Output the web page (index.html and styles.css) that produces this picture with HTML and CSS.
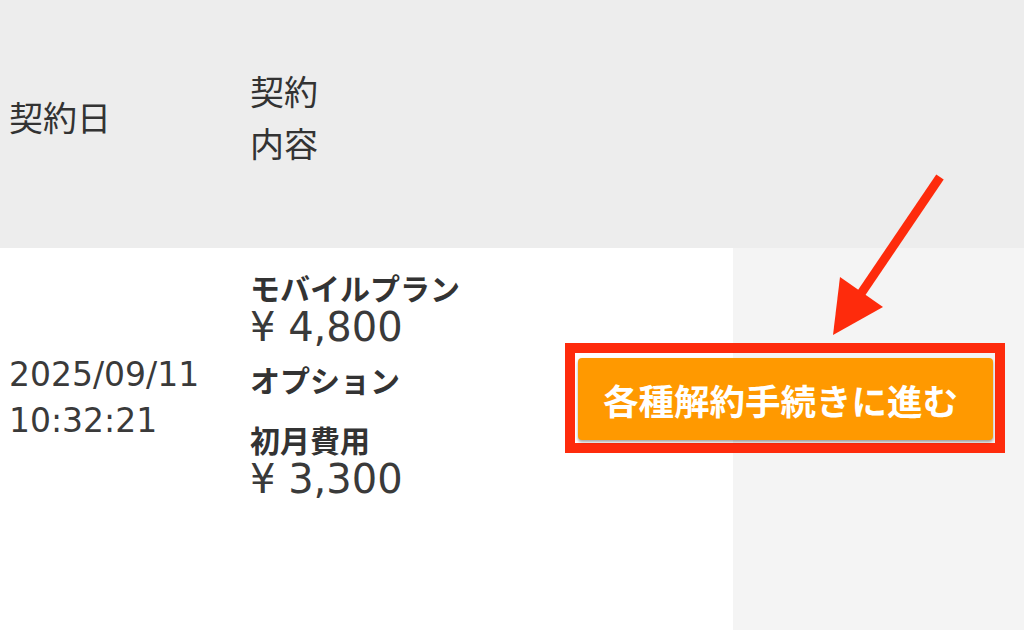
FILE: index.html
```html
<!DOCTYPE html>
<html lang="ja">
<head>
    <meta charset="UTF-8">
    <meta name="viewport" content="width=device-width, initial-scale=1.0">
    <title>契約一覧</title>
    <link rel="stylesheet" href="styles.css">
</head>
<body>
    <main id="contracts">
        <div class="row head">
            <div class="cell col-date">契約日</div>
            <div class="cell col-content">契約<br>内容</div>
            <div class="cell col-action"></div>
        </div>

        <div class="row item">
            <div class="cell col-date">
                2025/09/11<br>
                10:32:21
            </div>
            <div class="cell col-content">
                <div class="plan">
                    <span class="label">モバイルプラン</span>
                    <span class="price">¥ 4,800</span>
                </div>
                <div class="plan option">
                    <span class="label">オプション</span>
                </div>
                <div class="plan">
                    <span class="label">初月費用</span>
                    <span class="price">¥ 3,300</span>
                </div>
            </div>
            <div class="cell col-action">
                <span class="highlight-frame">
                    <a href="#" class="cancel-btn">各種解約手続きに進む</a>
                </span>
            </div>

            <svg class="pointer-arrow" width="1024" height="630" viewBox="0 0 1024 630">
                <line x1="940" y1="177" x2="858" y2="298" stroke="#fe2b0c" stroke-width="9"/>
                <polygon points="833,335 840,277 883,307" fill="#fe2b0c"/>
            </svg>
        </div>
    </main>
</body>
</html>
```

FILE: styles.css
```css
body {
    font-family: "Noto Sans CJK JP", "Noto Sans", sans-serif;
    color: #333;
    margin: 0;
    overflow: hidden;
}

#contracts {
    display: flex;
    flex-direction: column;
}

.row {
    display: grid;
    grid-template-columns: 240px 325px 459px;
}

.head {
    height: 248px;
    background-color: #ededed;
    align-items: center;
    padding-bottom: 14px;
    box-sizing: border-box;
    font-size: 34px;
    line-height: 52px;
}

.head .col-date {
    padding-left: 9px;
}

.head .col-content {
    padding-left: 10px;
}

.item {
    position: relative;
    min-height: 382px;
    background: linear-gradient(to right, #fff 733px, #f4f4f4 733px);
    align-items: center;
    padding-bottom: 82px;
    box-sizing: border-box;
}

.item .col-date {
    padding-left: 9px;
    font-family: "DejaVu Sans", "Noto Sans CJK JP", sans-serif;
    font-size: 33px;
    line-height: 46px;
    color: #3a3a3a;
}

.item .col-content {
    align-self: start;
    padding: 22px 0 0 10px;
    display: flex;
    flex-direction: column;
    gap: 15px;
}

.plan {
    display: flex;
    flex-direction: column;
}

.plan.option {
    margin-bottom: 11px;
}

.label {
    font-size: 30px;
    font-weight: 700;
    line-height: 34px;
}

.price {
    font-family: "DejaVu Sans", "Noto Sans CJK JP", sans-serif;
    font-size: 40px;
    line-height: 40px;
    padding-top: 3px;
    color: #3a3a3a;
}

.highlight-frame {
    display: inline-block;
    border: 10px solid #fe2b0c;
    padding: 5px 2px 3px 3px;
}

.cancel-btn {
    display: flex;
    align-items: center;
    justify-content: center;
    width: 415px;
    height: 82px;
    padding-right: 10px;
    box-sizing: border-box;
    background-color: #ff9900;
    color: #fff;
    font-size: 35.5px;
    font-weight: 700;
    text-decoration: none;
    border-radius: 4px;
    box-shadow: 0 2px 3px rgba(0, 0, 0, 0.35);
}

.pointer-arrow {
    position: absolute;
    top: -248px;
    left: 0;
    pointer-events: none;
}
```
